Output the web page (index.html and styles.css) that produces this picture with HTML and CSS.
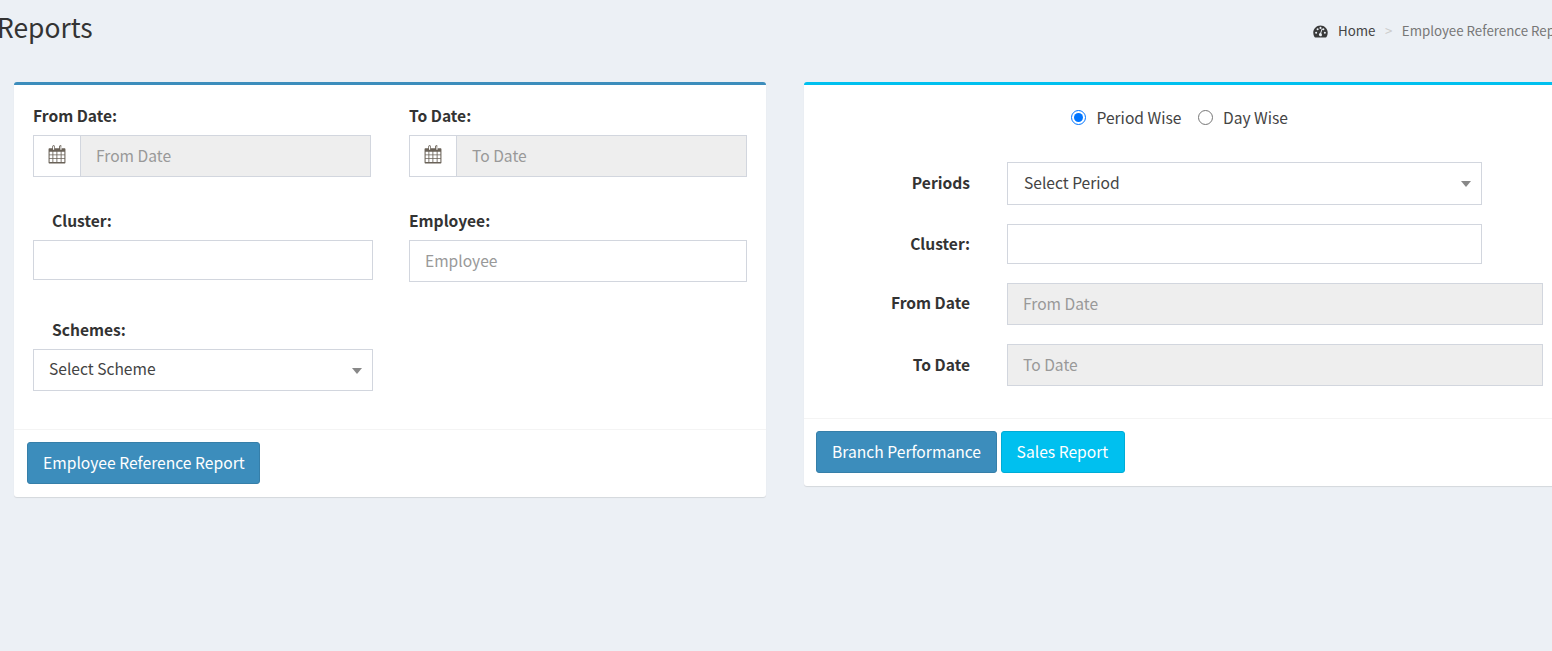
FILE: index.html
```html
<!DOCTYPE html>
<html lang="en">
<head>
<meta charset="utf-8">
<title>Reports</title>
<link rel="stylesheet" href="styles.css">
</head>
<body>
<div class="page">
  <header class="page-header">
    <h1 class="page-title">Reports</h1>
    <nav class="crumbs">
      <svg class="crumb-icon" viewBox="0 0 16 14" aria-hidden="true"><path fill-rule="evenodd" d="M8 0.5C3.6 0.5 0.2 4 0.2 8.4c0 1.7.5 3.2 1.3 4.5.2.3.5.5.9.5h11.2c.4 0 .7-.2.9-.5.8-1.3 1.3-2.8 1.3-4.5C15.800 4 12.400 0.500 8 0.500zM3.300 9.500a1.100 1.100 0 1 1 0-2.200 1.100 1.100 0 0 1 0 2.200zM4.900 5.700a1.100 1.100 0 1 1 0-2.200 1.100 1.100 0 0 1 0 2.200zM8 4.200A1.100 1.100 0 1 1 8 2a1.100 1.100 0 0 1 0 2.200zM9.500 11.200a1.700 1.700 0 0 1-3.200-.9c0-.8.6-1.500 1.400-1.600l1.500-4.400c.1-.3.400-.4.600-.3.300.1.400.4.300.6L8.700 9c.7.400 1 1.400.8 2.200zM12.700 9.500a1.100 1.100 0 1 1 0-2.200 1.100 1.100 0 0 1 0 2.200zM11.100 5.700a1.100 1.100 0 1 1 0-2.200 1.100 1.100 0 0 1 0 2.200z"/></svg>
      <a class="crumb-home">Home</a>
      <span class="crumb-sep">&gt;</span>
      <span class="crumb-current">Employee Reference Report</span>
    </nav>
  </header>

  <main class="columns">
    <section class="card card-primary">
      <div class="card-body left-body">
        <div class="left-grid">
          <div class="field">
            <label class="lbl">From Date:</label>
            <div class="input-group">
              <span class="addon">
                <svg class="cal" viewBox="0 0 17 18" aria-hidden="true"><path fill-rule="evenodd" d="M1.500 3H4V1.700C4 .8 4.600.300 5.300.300S6.500.8 6.500 1.700V3h4V1.700c0-.9.6-1.400 1.300-1.400s1.200.5 1.200 1.400V3h2.500c.6 0 1 .4 1 1v12.500c0 .6-.4 1-1 1h-14c-.6 0-1-.4-1-1V4c0-.6.4-1 1-1zM5 1.200c-.2 0-.3.1-.3.300v2.700c0 .2.100.3.300.3h.5c.2 0 .3-.1.300-.3V1.500c0-.2-.1-.3-.3-.3zm7 0c-.2 0-.3.1-.3.300v2.700c0 .2.100.3.300.3h.5c.2 0 .3-.1.300-.3V1.500c0-.2-.1-.3-.3-.3zM1.500 6.500V9h2.700V6.500zm3.500 0V9h3V6.500zm3.800 0V9H12V6.500zm4 0V9h2.700V6.500zM1.500 9.800v2.700h2.700V9.800zm3.500 0v2.700h3V9.800zm3.800 0v2.700H12V9.800zm4 0v2.700h2.700V9.800zM1.500 13.300v2.900h2.700v-2.900zm3.500 0v2.900h3v-2.900zm3.800 0v2.900H12v-2.900zm4 0v2.900h2.700v-2.900z"/></svg>
              </span>
              <input class="control grouped" type="text" placeholder="From Date" readonly>
            </div>
          </div>
          <div class="field">
            <label class="lbl">To Date:</label>
            <div class="input-group">
              <span class="addon">
                <svg class="cal" viewBox="0 0 17 18" aria-hidden="true"><path fill-rule="evenodd" d="M1.500 3H4V1.700C4 .8 4.600.300 5.300.300S6.500.8 6.500 1.700V3h4V1.700c0-.9.6-1.400 1.300-1.400s1.200.5 1.200 1.400V3h2.500c.6 0 1 .4 1 1v12.500c0 .6-.4 1-1 1h-14c-.6 0-1-.4-1-1V4c0-.6.4-1 1-1zM5 1.200c-.2 0-.3.1-.3.300v2.700c0 .2.100.3.300.3h.5c.2 0 .3-.1.300-.3V1.500c0-.2-.1-.3-.3-.3zm7 0c-.2 0-.3.1-.3.300v2.700c0 .2.100.3.300.3h.5c.2 0 .3-.1.300-.3V1.500c0-.2-.1-.3-.3-.3zM1.500 6.500V9h2.700V6.500zm3.500 0V9h3V6.500zm3.800 0V9H12V6.500zm4 0V9h2.700V6.500zM1.500 9.800v2.700h2.700V9.800zm3.500 0v2.700h3V9.800zm3.800 0v2.700H12V9.800zm4 0v2.700h2.700V9.800zM1.500 13.300v2.900h2.700v-2.900zm3.500 0v2.900h3v-2.900zm3.800 0v2.900H12v-2.900zm4 0v2.900h2.700v-2.900z"/></svg>
              </span>
              <input class="control grouped" type="text" placeholder="To Date" readonly>
            </div>
          </div>
          <div class="field">
            <label class="lbl indent">Cluster:</label>
            <input class="control short wide" type="text">
          </div>
          <div class="field">
            <label class="lbl">Employee:</label>
            <input class="control" type="text" placeholder="Employee">
          </div>
          <div class="field">
            <label class="lbl indent">Schemes:</label>
            <div class="select wide"><span>Select Scheme</span><i class="caret"></i></div>
          </div>
        </div>
      </div>
      <footer class="card-footer left-footer">
        <button class="btn btn-primary" type="button">Employee Reference Report</button>
      </footer>
    </section>

    <section class="card card-info">
      <div class="card-body right-body">
        <div class="radios">
          <label class="radio"><input type="radio" name="mode" checked>Period Wise</label>
          <label class="radio"><input type="radio" name="mode">Day Wise</label>
        </div>
        <div class="row row-periods">
          <label class="row-lbl">Periods</label>
          <div class="select narrow tall"><span>Select Period</span><i class="caret"></i></div>
        </div>
        <div class="row row-cluster">
          <label class="row-lbl">Cluster:</label>
          <input class="control short narrow" type="text">
        </div>
        <div class="row row-from">
          <label class="row-lbl">From Date</label>
          <input class="control full" type="text" placeholder="From Date" readonly>
        </div>
        <div class="row row-to">
          <label class="row-lbl">To Date</label>
          <input class="control full" type="text" placeholder="To Date" readonly>
        </div>
      </div>
      <footer class="card-footer right-footer">
        <button class="btn btn-primary" type="button">Branch Performance</button>
        <button class="btn btn-info" type="button">Sales Report</button>
      </footer>
    </section>
  </main>
</div>
</body>
</html>
```

FILE: styles.css
```css
* { box-sizing: border-box; }

html, body {
  margin: 0;
  height: 651px;
  overflow: hidden;
  background: #ecf0f5;
}

body {
  font-family: "Noto Sans CJK SC", "Noto Sans", "Open Sans", sans-serif;
  font-size: 15.6px;
  color: #333;
}

.page { width: 1552px; }

.page-header {
  display: flex;
  align-items: flex-start;
  justify-content: space-between;
  height: 82px;
}

.page-title {
  margin: 7px 0 0 -3px;
  font-size: 26.4px;
  font-weight: 400;
  line-height: 40px;
  color: #333;
}

.crumbs {
  display: flex;
  align-items: center;
  flex: none;
  width: 239px;
  height: 20px;
  margin-top: 20px;
  font-size: 13.3px;
  white-space: nowrap;
  overflow: hidden;
}

.crumb-icon { width: 15px; height: 13px; fill: #3a3a3a; flex: none; margin: 2px 10px 0 0; }
.crumb-home { color: #444; }
.crumb-sep { color: #ccc; margin: 0 9.5px; }
.crumb-current { color: #777; }

.columns {
  display: flex;
  align-items: flex-start;
  gap: 38px;
  margin-left: 14px;
}

.card {
  flex: none;
  width: 752px;
  background: #fff;
  border-top: 3px solid #3c8dbc;
  border-radius: 3px;
  box-shadow: 0 1px 1px rgba(0, 0, 0, .1);
}

.card-info { border-top-color: #00c0ef; }

.card-footer {
  display: flex;
  gap: 4px;
  border-top: 1px solid #f4f4f4;
}

.left-body { height: 344px; padding: 21px 19px 0; }
.left-footer { padding: 12px 13px 13px; }
.right-body { height: 333px; }
.right-footer { padding: 12px 12px 13px; }

.left-grid {
  display: grid;
  grid-template-columns: 340px 338px;
  column-gap: 36px;
  grid-template-rows: 105px 109px auto;
}

.lbl {
  display: block;
  height: 21px;
  margin-top: -1px;
  margin-bottom: 9px;
  font-weight: 700;
  line-height: 21px;
}

.lbl.indent { padding-left: 19px; }

.input-group { display: flex; width: 338px; }

.addon {
  display: flex;
  align-items: center;
  justify-content: center;
  flex: none;
  width: 48px;
  height: 42px;
  border: 1px solid #d2d6de;
  background: #fff;
}

.cal { width: 18px; height: 19px; fill: #6a6258; margin-top: -3px; }

.control {
  display: block;
  width: 100%;
  height: 42px;
  padding: 0 15px 2px;
  border: 1px solid #d2d6de;
  border-radius: 0;
  background: #fff;
  color: #555;
  font: inherit;
  outline: 0;
}

.control.grouped { border-left: 0; }
.control::placeholder { color: #999; opacity: 1; }
.control[readonly] { background: #eee; }
.control.short { height: 40px; }

.select {
  position: relative;
  display: flex;
  align-items: center;
  height: 42px;
  padding: 0 16px 3px;
  border: 1px solid #d2d6de;
  background: #fff;
  color: #444;
}

.select.wide { padding: 0 16px 5px 15px; }
.select.tall { height: 43px; }

.caret {
  position: absolute;
  top: 18px;
  right: 10px;
  border-style: solid;
  border-width: 6px 5px 0;
  border-color: #888 transparent transparent;
}

.wide { width: 340px; }
.narrow { width: 475px; }
.full { width: 536px; }

.radios {
  display: flex;
  justify-content: center;
  gap: 16.5px;
  height: 77px;
  padding: 22px 1px 0 0;
}

.radio {
  display: flex;
  align-items: center;
  height: 22px;
  margin-top: -1px;
  color: #444;
}

.radio input {
  width: 15px;
  height: 15px;
  margin: 1px 10.5px 0 0;
}

.radio + .radio input { margin-right: 10px; }

.row {
  display: flex;
  align-items: center;
}

.row-lbl {
  flex: none;
  width: 166px;
  margin-right: 37px;
  padding-bottom: 3px;
  font-weight: 700;
  text-align: right;
}

.row-from .row-lbl { padding-bottom: 5px; }

.row-periods { height: 43px; margin-bottom: 19px; }
.row-cluster { height: 40px; margin-bottom: 19px; }
.row-from { height: 42px; margin-bottom: 19px; }
.row-to { height: 42px; }

.btn {
  height: 42px;
  padding: 0 14.6px 2px 15px;
  border: 1px solid;
  border-radius: 3px;
  color: #fff;
  font: inherit;
  font-size: 15.65px;
  white-space: nowrap;
}

.btn-primary { background: #3c8dbc; border-color: #367fa9; }
.btn-info { padding-right: 15.4px; background: #00c0ef; border-color: #00acd6; }
```
